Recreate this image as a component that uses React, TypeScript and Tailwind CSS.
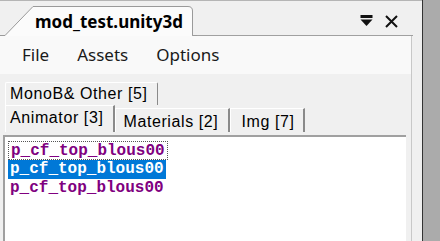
import React from 'react';

const items = ['p_cf_top_blous00', 'p_cf_top_blous00', 'p_cf_top_blous00'];

export default function App() {
  return (
    <div className="flex h-[241px] w-[440px] overflow-hidden bg-[#ababab]">
      <div className="flex w-[423px] flex-col border-r border-[#333] bg-[#f0f0f0]">
        {/* document tab strip */}
        <div className="relative flex h-[36px] shrink-0 items-end border-t border-[#b5b5b5] pr-[10px]">
          <div className="absolute bottom-0 left-0 h-px w-[413px] bg-[#a0a0a0]" />
          <div className="relative ml-0 flex h-[30px] w-[197px] items-center">
            <svg className="absolute inset-0" width="197" height="30" viewBox="0 0 197 30">
              <path d="M0 29.5 L5 29.5 L33 0.5 L188 0.5 Q192.5 0.5 192.5 5 L192.5 29.5 L197 29.5" fill="#fbfbfb" stroke="#9a9a9a" strokeWidth="1" />
              <rect x="5.5" y="29" width="186.5" height="2" fill="#fbfbfb" />
            </svg>
            <span className="relative ml-[35px] font-['Noto_Sans',sans-serif] text-[17px] font-bold leading-none text-black">
              mod_test.unity3d
            </span>
          </div>
          <div className="ml-auto flex h-[30px] items-center gap-[12px] pr-[14px]">
            <svg width="13" height="12" viewBox="0 0 13 12">
              <rect x="0.5" y="0" width="12" height="3" fill="#111" />
              <path d="M0.5 4.5 L12.5 4.5 L6.5 11 Z" fill="#111" />
            </svg>
            <svg width="13" height="13" viewBox="0 0 13 13">
              <path d="M1 1 L12 12 M12 1 L1 12" stroke="#111" strokeWidth="2" />
            </svg>
          </div>
        </div>

        <div className="flex flex-1 flex-col">
          <div className="mr-[10px] flex flex-1 flex-col border-r border-[#c8c8c8]">
            {/* menu bar */}
            <div className="flex h-[38px] shrink-0 items-center gap-[28px] bg-[#f9f9f9] pl-[22px] font-['Noto_Sans',sans-serif] text-[17px] text-[#1a1a1a]">
              <span>File</span>
              <span>Assets</span>
              <span>Options</span>
            </div>

            {/* tab rows */}
            <div className="flex flex-col pt-[8px] pl-[5px] font-['Liberation_Sans',sans-serif] text-[16px] leading-none tracking-[0.6px] text-black">
              <div className="flex">
                <div className="flex h-[23px] items-center rounded-t-[2px] border-t border-r border-l border-t-white border-r-[#8a8a8a] border-l-white bg-[#f0f0f0] pr-[9px] pl-[4px]">
                  MonoB&amp; Other [5]
                </div>
              </div>
              <div className="flex items-end">
                <div className="flex h-[27px] items-center border-t border-r-2 border-l border-t-white border-r-[#8a8a8a] border-l-white pr-[10px] pl-[4px] pb-[3px]">
                  Animator [3]
                </div>
                <div className="flex h-[24px] items-center border-t border-r-2 border-l border-t-white border-r-[#8a8a8a] border-l-white pt-[2px] pr-[10px] pl-[7px]">
                  Materials [2]
                </div>
                <div className="flex h-[24px] items-center border-t border-r-2 border-l border-t-white border-r-[#8a8a8a] border-l-white pt-[2px] pr-[8px] pl-[10px]">
                  Img [7]
                </div>
              </div>
            </div>

            {/* list box */}
            <div className="mt-[3px] mr-[5px] ml-[3px] flex-1 border-t-2 border-l-2 border-[#a0a0a0] bg-white pt-[4px] pl-[3px]">
              {items.map((item, i) => (
                <div key={i} className="flex">
                  <div
                    className={
                      'h-[19px] px-[2px] font-["Liberation_Mono",monospace] text-[16px] font-bold leading-[19px] ' +
                      (i === 1
                        ? 'bg-[#0078d7] text-white'
                        : i === 0
                          ? 'border border-dotted border-[#555] leading-[17px] text-[#800080]'
                          : 'text-[#800080]')
                    }
                  >
                    {item}
                  </div>
                </div>
              ))}
            </div>
          </div>
        </div>
      </div>
      <div className="flex-1" />
    </div>
  );
}
